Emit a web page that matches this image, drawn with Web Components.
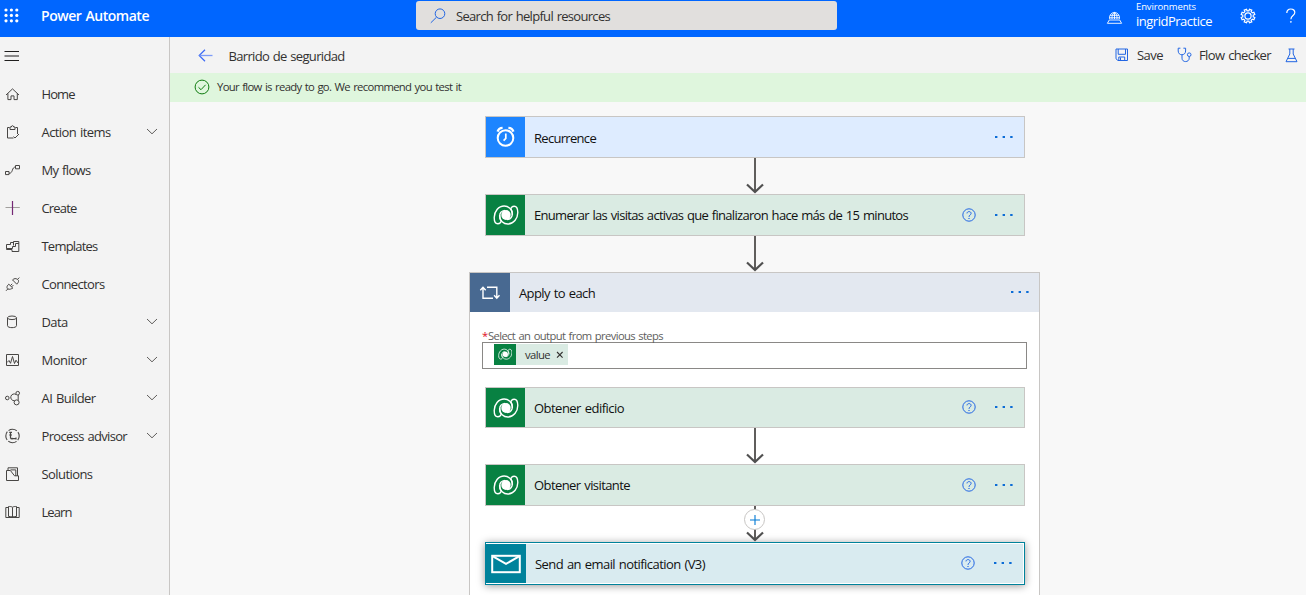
<!DOCTYPE html>
<html lang="en">
<head>
<meta charset="utf-8">
<title>Power Automate</title>
<style>
html,body{margin:0;height:100%;overflow:hidden}
body{font-family:"Open Sans","Noto Sans",sans-serif;font-size:13px;color:#323130;background:#f8f8f8}
</style>
</head>
<body>
<flow-app></flow-app>
<script>
const LOBE='<path d="M14 15.6C17.5 15.2 19.3 13 19.3 10C19.3 5.5 15.5 2 11.2 2C5.5 2 1.2 7.5 1.2 13.5C1.2 17.5 2.5 19.8 4.8 19.8C6.7 19.8 8.6 18.2 7.8 16.3C6.8 14.6 6.4 13 6.7 11" stroke-width="1.4"/>';
const ICONS = {
  waffle:[15,15,'<g fill="#fff" stroke="none">'+[0,1,2].map(r=>[0,1,2].map(c=>`<circle cx="${2+c*5.4}" cy="${2+r*5.4}" r="1.6"/>`).join('')).join('')+'</g>'],
  search:[16,16,'<circle cx="10" cy="5.7" r="4.8"/><path d="M6.5 9.2L.8 14.8"/>'],
  env:[17,17,'<path d="M3.8 11.2A5 5 0 1 1 13.2 11.2M8.5 4.4V11M4 7.3H13M3.5 9.8H13.5M8.5 4.4C6 6 5.7 9 6.1 11M8.5 4.4C11 6 11.3 9 10.9 11M3.3 12H13.7L15.6 15.3H1.4Z" stroke-width=".9"/>'],
  gear:[16,16,'<path d="M6.5 1.2 7.1 2.8H8.9L9.5 1.2 11.8 2.1 11.1 3.7 12.3 4.9 13.9 4.2 14.8 6.5 13.2 7.1V8.9L14.8 9.5 13.9 11.8 12.3 11.1 11.1 12.3 11.8 13.9 9.5 14.8 8.9 13.2H7.1L6.5 14.8 4.2 13.9 4.9 12.3 3.7 11.1 2.1 11.8 1.2 9.5 2.8 8.9V7.1L1.2 6.5 2.1 4.2 3.7 4.9 4.9 3.7 4.2 2.1Z" stroke-width="1.2"/><circle cx="8" cy="8" r="3.1" stroke-width="1.2"/>'],
  question:[12,16,'<path d="M1.8 5C1.8 2.5 3.5 1 5.8 1S9.8 2.5 9.8 4.6C9.8 7.6 5.9 7.4 5.9 11.2" stroke-width="1.2"/><circle cx="5.9" cy="13.9" r=".5"/>'],
  menu:[16,12,'<path d="M.5 1.5H15M.5 6H15M.5 10.5H15" stroke-width="1.1"/>'],
  chevron:[12,7,'<path d="M1 1 6 5.8 11 1" stroke="#605e5c"/>'],
  home:[18,18,'<path d="M2 10 8.5 3.9 15 10M3.9 8.4V14.6H7V10.9H10V14.6H13.3V8.4"/>'],
  action:[18,18,'<path d="M5.5 4.5H3.5V15H9.5M11.5 4.5H13.5V11M6 6.5V4H7.3C7.5 2.2 9.5 2.2 9.7 4H11V6.5ZM9.5 13.6 11 15 15 11"/>'],
  flows:[18,18,'<path d="M1.5 10.5H5V13.6H1.5ZM11.5 4.5H15.5V7.8H11.5ZM5 12.3C9.3 12.5 7.5 6 11.5 6"/>'],
  plus:[18,18,'<path d="M1.5 8.5H15.8" stroke="#a19f9d"/><path d="M8.5 2V16" stroke="#742774" stroke-width="1.2"/>'],
  templates:[18,18,'<path d="M2.5 11.5V7.5H6.5V5.5H9.5M9.5 8.5V4.5H14.8V14.5H8V12.5M2.5 11.5H8.5V9.5H11.5V6.5H14.8M2.5 11.5V12.5H8"/>'],
  connectors:[18,18,'<path d="M2 15.8 4 13.8M13.4 4.5 15.3 2.6M4.8 9.2C2 11.5 3 13.7 4 14 5.5 14.8 7.5 13.8 8.8 13.1ZM8.5 4.9 12.8 9.2C15.5 6.4 14.6 4.9 13.4 4.4 12 3.1 10.2 3.4 8.5 4.9ZM6.4 10.6 8.2 8.8M7.6 11.9 9.4 10.1"/>'],
  data:[18,18,'<ellipse cx="8" cy="4.8" rx="4.5" ry="1.8"/><path d="M3.5 4.8V12.7C3.5 15.3 12.5 15.3 12.5 12.7V4.8"/>'],
  monitor:[18,18,'<path d="M2.5 3.5H14.5V14.5H2.5ZM3 11.5 5 9.5 6.5 12.3 8.5 5.5 10.5 12.5 12 9.2 14 12"/>'],
  ai:[18,18,'<circle cx="3.3" cy="9" r="1.8"/><circle cx="13.7" cy="4.2" r="1.8"/><circle cx="12.6" cy="13.4" r="2.5"/><path d="M12.2 5.6A3.4 3.4 0 1 0 10.5 11.7M14.2 6V11.3"/>'],
  process:[18,18,'<circle cx="8.5" cy="9" r="6.7" stroke-dasharray="8.9 1.62" stroke-dashoffset="4.4" stroke-width="1.1"/><path d="M5.2 5.4H8M6.5 5V11.6M5.2 8H8M8 10.8V12.4M6.5 11.6H12.5M12 10.5V12.5" stroke-width="1.2"/>'],
  solutions:[18,18,'<path d="M4 5V2.8H13.5V11M2.5 5.5H6.4L10.5 10.8H14.5V15.5H2.5ZM6.5 4.9H11.8V11"/>'],
  learn:[18,18,'<path d="M8.5 14C7.5 13.4 5.5 13.5 4.5 13.5V3.5C6 3.4 7.7 3.6 8.5 4.2 9.3 3.6 11 3.4 12.5 3.5V13.5C11.5 13.5 9.5 13.4 8.5 14V4.4M4 4.5H1.8V14.5H15.2V4.5H13"/>'],
  back:[15,13,'<path d="M7 .8 1.2 6.5 7 12.2" stroke="#3b69f5" stroke-width="1.2"/><path d="M1.5 6.5H14.5" stroke="#7d9cf8" stroke-width="1.3"/>'],
  save:[14,14,'<path d="M1 1H12.5V12.5H3L1 10.8ZM3.2 1V6.3H10.5V1M3.8 12.5V9H9.7V12.5M5.5 12V9.5"/>'],
  checker:[16,16,'<path d="M3.4 1.2H1.2V4C1.2 9 8.6 9 8.6 4V1.2H6.4M5 7.8V11.2C5 15.8 12.2 15.6 12.2 11.2V9.7"/><circle cx="12.2" cy="7.7" r="1.8"/>'],
  flask:[14,15,'<path d="M3.5 1H9.5M4.8 1V6L1 13.7H12L8.2 6V1M2.7 10.4H10.3"/>'],
  ok:[16,16,'<circle cx="8" cy="8" r="6.9"/><path d="M4.5 8.3 7 10.7 11.6 5.8"/>'],
  help:[14,14,'<circle cx="7" cy="7" r="6.2"/><path d="M5 5.4C5 3 9.1 3 9.1 5.4 9.1 7 7 6.9 7 8.9"/><path d="M7 10V11.1" stroke-width="1.2"/>'],
  dots:[20,4,'<g fill="currentColor" stroke="none"><rect x="1" y="1" width="2.4" height="2"/><rect x="8.6" y="1" width="2.4" height="2"/><rect x="16.2" y="1" width="2.4" height="2"/></g>'],
  clock:[20,22,'<circle cx="9.5" cy="12" r="7.8" stroke-width="2"/><path d="M9.8 7.6V12.4L7.6 14.6" stroke-width="1.7"/><path d="M1.6 5.6C2.2 3.4 3.9 2 6.6 1.9M17.4 5.6C16.8 3.4 15.1 2 12.4 1.9" stroke-width="2.3"/>'],
  dataverse:[26,22,LOBE+`<g transform="rotate(180 13 11)">${LOBE}</g><ellipse cx="13" cy="11" rx="4.7" ry="4.9" fill="#fff" stroke="none"/>`],
  loop:[22,16,'<path d="M4 3V13.3H14M8 2.3H17.8V12.5M1.3 5.3 4 2.3 6.7 5.3M15.1 10.2 17.8 13.2 20.5 10.2" stroke-width="1.4"/>'],
  mail:[30,20,'<rect x="1.2" y="1.8" width="27.6" height="16.4" stroke-width="2"/><path d="M1.5 2.2 15 9.9 28.5 2.2" stroke-width="2"/>'],
  arrow:[18,36,'<path d="M9 0V34" stroke="#605e5c" stroke-width="2"/><path d="M1 26.5 9 34 17 26.5" stroke="#505050" stroke-width="2.2"/>'],
  add:[12,12,'<path d="M1 6H11M6 1V11" stroke-width="1.1"/>'],
  close:[8,8,'<path d="M1 1 6.6 6.6M6.6 1 1 6.6" stroke-width="1.1"/>']
};
class Base extends HTMLElement{
  connectedCallback(){
    if(this.shadowRoot) return;
    this.attachShadow({mode:'open'}).innerHTML=this.render();
    if(this.ready) this.ready();
  }
  at(n,d=''){return this.getAttribute(n)??d}
}
customElements.define('ui-icon',class extends Base{
  render(){
    const [w,h,body]=ICONS[this.at('name')], s=+this.at('scale','1');
    return `<style>:host{display:block;flex:none}svg{display:block}</style><svg width="${w*s}" height="${h*s}" viewBox="0 0 ${w} ${h}" fill="none" stroke="currentColor">${body}</svg>`;
  }
});
/* One line of text whose tracking is adjusted to fill the given width. */
customElements.define('ui-text',class extends Base{
  render(){return `<style>:host{display:block;flex:none;white-space:nowrap;width:${this.at('w')}px}span{display:inline-block;word-spacing:1px}</style><span></span>`}
  ready(){
    const s=this.shadowRoot.querySelector('span');
    s.textContent=this.at('text');
    s.style.letterSpacing=(this.at('w')-s.getBoundingClientRect().width)/this.at('text').length+'px';
  }
});
customElements.define('app-header',class extends Base{
  render(){return `<style>
    :host{display:grid;grid-template-columns:416px 421px 1fr;height:37px;background:#0066ff;color:#fff}
    .brand{display:flex;align-items:center;height:32px;padding-left:4px;gap:22px;font-weight:600;font-size:14px}
    .brand ui-icon{margin-top:-2px}.brand ui-text{margin-top:-1px}
    .search{display:flex;align-items:center;gap:10px;box-sizing:border-box;height:29px;margin-top:1px;padding-left:14px;background:#e1dfdd;border-radius:3px;color:#323130}
    .search ui-icon{color:#2266e3}
    .right{display:flex;justify-content:flex-end;height:32px;align-items:center}
    .names{display:flex;flex-direction:column;margin:-2px 28px 0 13px}
    .names ui-text{line-height:16px}
    .small{font-size:9.5px;height:12px;line-height:12px!important}
    .gear{margin-top:-1px}
    .q{margin-left:29px;margin-right:9px;width:12px;margin-top:-1px}
  </style>
  <div class="brand"><ui-icon name="waffle"></ui-icon><ui-text w="108" text="Power Automate"></ui-text></div>
  <div class="search"><ui-icon name="search"></ui-icon><ui-text w="154" text="Search for helpful resources"></ui-text></div>
  <div class="right"><ui-icon name="env"></ui-icon><div class="names"><ui-text class="small" w="60" text="Environments"></ui-text><ui-text w="76" text="ingridPractice"></ui-text></div><ui-icon class="gear" name="gear"></ui-icon><ui-icon class="q" name="question"></ui-icon></div>`}
});
customElements.define('nav-item',class extends Base{
  render(){return `<style>
    :host{display:flex;align-items:center;height:38px;padding-left:4px}
    .i{color:#484644;width:37.5px}
    .c{margin:-1px 11px 0 auto}
  </style><ui-icon class="i" name="${this.at('icon')}"></ui-icon><ui-text w="${this.at('w')}" text="${this.at('label')}"></ui-text>${this.hasAttribute('open')?'<ui-icon class="c" name="chevron"></ui-icon>':''}`}
});
customElements.define('side-nav',class extends Base{
  render(){
    const items=[['home','Home',33],['action','Action items',69,1],['flows','My flows',49],['plus','Create',35],['templates','Templates',56],['connectors','Connectors',63],['data','Data',26,1],['monitor','Monitor',45,1],['ai','AI Builder',54,1],['process','Process advisor',85.5,1],['solutions','Solutions',51],['learn','Learn',30]];
    return `<style>:host{display:block;box-sizing:border-box;width:170px;border-right:1px solid #c8c6c4;background:#f3f3f3}.m{display:flex;align-items:center;height:38px;padding-left:4px;color:#201f1e}</style>
    <div class="m"><ui-icon name="menu"></ui-icon></div>${items.map(([i,l,w,o])=>`<nav-item icon="${i}" label="${l}" w="${w}" ${o?'open':''}></nav-item>`).join('')}`}
});
customElements.define('flow-toolbar',class extends Base{
  render(){return `<style>
    :host{display:flex;align-items:center;height:36px;box-sizing:border-box;padding:0 7px 0 28px;background:#f3f3f3}
    .t{margin-left:15.5px;margin-top:1px}.r{display:flex;align-items:center;margin-left:auto}.r ui-icon{color:#2266e3}
    .a{margin:-1px 14px 0 8px}.b{margin:-1px 14px 0 6px}
  </style><ui-icon name="back"></ui-icon><ui-text class="t" w="116" text="Barrido de seguridad"></ui-text>
  <div class="r"><ui-icon name="save"></ui-icon><ui-text class="a" w="26" text="Save"></ui-text><ui-icon name="checker"></ui-icon><ui-text class="b" w="72" text="Flow checker"></ui-text><ui-icon name="flask"></ui-icon></div>`}
});
customElements.define('flow-banner',class extends Base{
  render(){return `<style>:host{display:flex;align-items:center;gap:7px;box-sizing:border-box;height:29px;padding:0 0 2px 24px;background:#dff6dd;font-size:11.3px}ui-icon{color:#107c10}</style><ui-icon name="ok"></ui-icon><ui-text w="244" text="Your flow is ready to go. We recommend you test it"></ui-text>`}
});
customElements.define('flow-card',class extends Base{
  render(){
    const sel=this.hasAttribute('selected');
    return `<style>
    :host{display:flex;box-sizing:border-box;width:540px;height:${this.at('h','42')}px;border:1px solid #c8c6c4;background:${this.at('bg')};color:#111;align-items:stretch}
    :host([selected]){border-color:#00829b;box-shadow:inset 0 0 0 1px #fff,0 1px 8px rgba(0,0,0,.4)}
    .ic{display:grid;place-items:center;flex:none;width:39px;background:${this.at('color')};color:#fff}
    :host([selected]) .ic{width:40px;margin:1px 0}
    .t{align-self:center;margin:${this.at('top','0')}px 0 0 9px}
    .r{display:flex;align-items:center;gap:18px;margin-left:auto;padding:0 ${sel?11:10}px ${this.at('lift','0')}px 0;color:#0b6cd6}
  </style><div class="ic"><ui-icon name="${this.at('icon')}"></ui-icon></div><ui-text class="t" w="${this.at('w')}" text="${this.at('label')}"></ui-text>
  <div class="r">${this.hasAttribute('help')?'<ui-icon name="help" style="color:#2266e3"></ui-icon>':''}<ui-icon name="dots"></ui-icon></div>`}
});
customElements.define('flow-arrow',class extends Base{
  render(){return `<style>:host{display:flex;justify-content:center;position:relative;width:540px;height:36px}
    b{position:absolute;box-sizing:border-box;left:259px;top:3px;width:21px;height:21px;border:1px solid #c8c6c4;border-radius:50%;background:#fff;color:#0078d4;display:grid;place-items:center}</style>
    <ui-icon name="arrow"></ui-icon>${this.hasAttribute('add')?'<b><ui-icon name="add"></ui-icon></b>':''}`}
});
customElements.define('value-token',class extends Base{
  render(){return `<style>:host{display:flex;align-items:center;width:74px;height:21px;background:#daebe3;color:#323130;font-size:11.3px}
    .i{display:grid;place-items:center;width:22px;height:21px;background:#088142;color:#fff}.t{margin-left:9px}.x{margin:1px 0 0 6px}</style>
    <div class="i"><ui-icon name="dataverse" scale=".56"></ui-icon></div><ui-text class="t" w="25" text="value"></ui-text><ui-icon class="x" name="close"></ui-icon>`}
});
customElements.define('flow-scope',class extends Base{
  render(){return `<style>
    :host{display:block;box-sizing:border-box;width:571px;height:360px;border:1px solid #c8c6c4;background:#fff;margin-left:-16px}
    .h{display:flex;height:39px;align-items:center;background:#e3e8f0;color:#111}
    .ic{display:grid;place-items:center;width:40px;height:39px;background:#486991;color:#fff}
    .t{margin:1px 0 0 9px}.d{margin:-1px 9px 0 auto;color:#0b6cd6}
    .l{display:flex;gap:1px;height:14px;line-height:14px;margin:17px 0 0 12px;font-size:11.2px;color:#605e5c}
    .l i{font-style:normal;color:#e00b1c;width:5px}
    .in{box-sizing:border-box;width:545px;height:27px;margin:-1px 0 18px 12px;border:1px solid #8a8886;padding:1px 0 0 11px}
    .s{padding-left:15px}
  </style><div class="h"><div class="ic"><ui-icon name="loop"></ui-icon></div><ui-text class="t" w="76" text="Apply to each"></ui-text><ui-icon class="d" name="dots"></ui-icon></div>
  <div class="l"><i>*</i><ui-text w="175" text="Select an output from previous steps"></ui-text></div>
  <div class="in"><value-token></value-token></div><div class="s"><slot></slot></div>`}
});
customElements.define('flow-app',class extends Base{
  render(){return `<style>
    :host{display:grid;grid-template-rows:37px 1fr;height:595px;overflow:hidden}
    .b{display:grid;grid-template-columns:170px 1fr;min-height:0}
    main{min-width:0;min-height:0;overflow:hidden;background:#f8f8f8}
    .c{padding:14px 0 0 315px}
  </style><app-header></app-header><div class="b"><side-nav></side-nav><main><flow-toolbar></flow-toolbar><flow-banner></flow-banner>
  <div class="c">
    <flow-card top="2" bg="#deecff" color="#1e85ff" icon="clock" w="62" label="Recurrence"></flow-card>
    <flow-arrow></flow-arrow>
    <flow-card bg="#daebe3" color="#088142" icon="dataverse" w="374" help label="Enumerar las visitas activas que finalizaron hace más de 15 minutos"></flow-card>
    <flow-arrow></flow-arrow>
    <flow-scope>
      <flow-card h="41" lift="1" bg="#daebe3" color="#088142" icon="dataverse" w="90" help label="Obtener edificio"></flow-card>
      <flow-arrow></flow-arrow>
      <flow-card bg="#daebe3" color="#088142" icon="dataverse" w="96" help label="Obtener visitante"></flow-card>
      <flow-arrow add></flow-arrow>
      <flow-card h="43" lift="2" selected bg="#d9ebf0" color="#00829b" icon="mail" w="170" help label="Send an email notification (V3)"></flow-card>
    </flow-scope>
  </div></main></div>`}
});
</script>
</body>
</html>
